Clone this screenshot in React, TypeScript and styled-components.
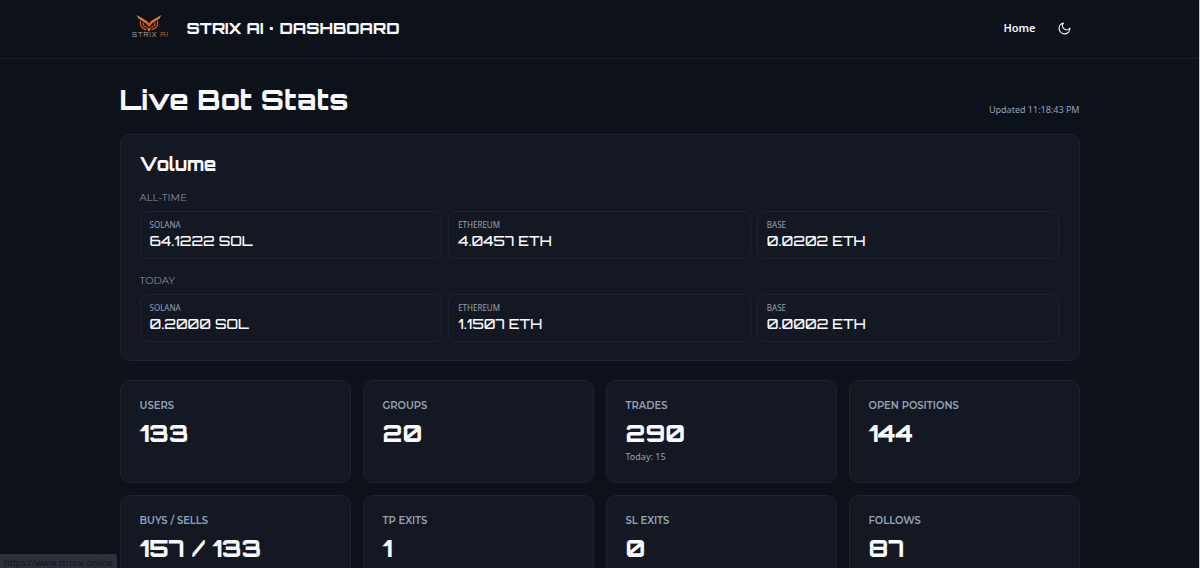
import React from "react";
import styled, { createGlobalStyle } from "styled-components";

const display = `"Orbitron", "DejaVu Sans", sans-serif`;
const label = `"Montserrat", "Inter", sans-serif`;
const body = `"Noto Sans", sans-serif`;

const GlobalStyle = createGlobalStyle`
  *, *::before, *::after { box-sizing: border-box; }
  html { scrollbar-width: none; background: #0d1119; }
  body { margin: 0; font-family: ${body}; color: #f8fafc; }
  h1, h2, h3, p, dl, dt, dd { margin: 0; }
`;

const Page = styled.div`
  height: 100vh;
  overflow: hidden;
  background: #0d1119;
  border-right: 1px solid #c9cbd0;
`;

const Header = styled.header`
  border-bottom: 1px solid #1b202d;
`;

const Container = styled.div`
  width: 100%;
  max-width: 960px;
  margin: 0 auto;
`;

const HeaderRow = styled(Container)`
  display: flex;
  align-items: center;
  justify-content: space-between;
  padding: 8px 5px 10px 8px;
`;

const Brand = styled.a`
  display: flex;
  align-items: center;
  gap: 16px;
  color: inherit;
  text-decoration: none;
`;

const BrandName = styled.span`
  font: 800 16px/40px ${display};
`;

const Nav = styled.nav`
  display: flex;
  align-items: center;
  gap: 19px;
`;

const NavLink = styled.a`
  color: #f8fafc;
  font: 600 11px/16px ${body};
  text-decoration: none;
`;

const ThemeButton = styled.button`
  display: grid;
  place-items: center;
  width: 20px;
  height: 20px;
  padding: 0;
  border: 0;
  background: none;
  color: #f8fafc;
`;

const Main = styled(Container).attrs({ as: "main" })`
  display: flex;
  flex-direction: column;
  padding: 21px 0;
`;

const TitleRow = styled.div`
  display: flex;
  align-items: flex-end;
  justify-content: space-between;
  margin-bottom: 14px;
`;

const Title = styled.h1`
  font: 800 28px/40px ${display};
`;

const Note = styled.p`
  color: #94a3b8;
  font: 400 9px/20px ${body};
`;

const Card = styled.section`
  background: #141822;
  border: 1px solid #1e2433;
  border-radius: 10px;
  padding: 18px 19px;
`;

const CardTitle = styled.h2`
  font: 800 18px/22px ${display};
`;

const Period = styled.div`
  padding-top: 17px;

  & + & {
    padding-top: 16px;
  }
`;

const PeriodName = styled.h3`
  color: #8492a6;
  font: 400 10px/12px ${label};
  margin-bottom: 7px;
`;

const Chains = styled.div`
  display: grid;
  grid-template-columns: repeat(3, 1fr);
  gap: 6px;
`;

const Chain = styled.dl`
  border: 1px solid #1e2433;
  border-radius: 8px;
  padding: 7px 9px;
`;

const ChainName = styled.dt`
  color: #94a3b8;
  font: 400 8px/12px ${body};
`;

const ChainValue = styled.dd`
  font: 500 14px/20px ${display};
`;

const Stats = styled.div`
  display: grid;
  grid-template-columns: repeat(4, 1fr);
  grid-auto-rows: 103px;
  gap: 12px;
  margin-top: 19px;
`;

const StatLabel = styled.h3`
  color: #94a3b8;
  font: 600 10px/14px ${label};
`;

const StatValue = styled.p`
  font: 800 24px/28px ${display};
  margin-top: 6px;
`;

const StatusBubble = styled.div`
  position: fixed;
  left: 0;
  bottom: 0;
  height: 14px;
  padding: 0 4px;
  background: #2b303b;
  border-radius: 0 3px 0 0;
  color: #10141c;
  font: 400 9px/17px ${body};
  overflow: hidden;
`;

const OwlLogo = () => (
  <svg width="43" height="40" viewBox="0 0 43 40" role="img" aria-label="Strix AI">
    <defs>
      <linearGradient id="owl" x1="0" y1="0" x2="0" y2="1">
        <stop offset="0" stopColor="#f08a2c" />
        <stop offset="1" stopColor="#d9541c" />
      </linearGradient>
    </defs>
    <g fill="url(#owl)">
      <path d="M8.500 7 L19 13 L21 15.500 L23 13 L33.500 7 L31.500 10.500 L24 15.500 L21 19 L18 15.500 L10.500 10.500 Z" />
      <path d="M19.300 19 L21 20.500 L22.700 19 L22.200 22 L21 24 L19.800 22 Z" />
    </g>
    <g fill="none" stroke="#c8581f" strokeWidth="1.300">
      <path d="M12.500 13 C11.500 17.500 14 21 18.500 21.500" />
      <path d="M29.500 13 C30.500 17.500 28 21 23.500 21.500" />
      <path d="M15 14.500 C14.700 17.500 16.500 19.200 18.800 18.700" />
      <path d="M27 14.500 C27.300 17.500 25.500 19.200 23.200 18.700" />
    </g>
    <text x="4" y="29" fontFamily="Orbitron, DejaVu Sans" fontWeight="500" fontSize="6" letterSpacing="1" fill="#858a94">
      STRIX <tspan fill="#b85420">AI</tspan>
    </text>
  </svg>
);

const MoonIcon = () => (
  <svg width="13" height="13" viewBox="0 0 24 24" fill="none" stroke="currentColor" strokeWidth="2.200" strokeLinecap="round" strokeLinejoin="round" aria-hidden="true">
    <path d="M10 2a7.500 7.500 0 0 0 12 9.500A10 10 0 1 1 10 2Z" />
  </svg>
);

const volumes = [
  { period: "ALL-TIME", values: [["SOLANA", "64.1222 SOL"], ["ETHEREUM", "4.0457 ETH"], ["BASE", "0.0202 ETH"]] },
  { period: "TODAY", values: [["SOLANA", "0.2000 SOL"], ["ETHEREUM", "1.1507 ETH"], ["BASE", "0.0002 ETH"]] },
];

const stats: { name: string; value: string; note?: string }[] = [
  { name: "USERS", value: "133" },
  { name: "GROUPS", value: "20" },
  { name: "TRADES", value: "290", note: "Today: 15" },
  { name: "OPEN POSITIONS", value: "144" },
  { name: "BUYS / SELLS", value: "157 / 133" },
  { name: "TP EXITS", value: "1" },
  { name: "SL EXITS", value: "0" },
  { name: "FOLLOWS", value: "87" },
];

export default function App() {
  return (
    <>
      <GlobalStyle />
      <Page>
        <Header>
          <HeaderRow>
            <Brand href="#">
              <OwlLogo />
              <BrandName>STRIX AI · DASHBOARD</BrandName>
            </Brand>
            <Nav>
              <NavLink href="#">Home</NavLink>
              <ThemeButton type="button" aria-label="Toggle theme">
                <MoonIcon />
              </ThemeButton>
            </Nav>
          </HeaderRow>
        </Header>
        <Main>
          <TitleRow>
            <Title>Live Bot Stats</Title>
            <Note>Updated 11:18:43 PM</Note>
          </TitleRow>
          <Card>
            <CardTitle>Volume</CardTitle>
            {volumes.map((v) => (
              <Period key={v.period}>
                <PeriodName>{v.period}</PeriodName>
                <Chains>
                  {v.values.map(([name, value]) => (
                    <Chain key={name}>
                      <ChainName>{name}</ChainName>
                      <ChainValue>{value}</ChainValue>
                    </Chain>
                  ))}
                </Chains>
              </Period>
            ))}
          </Card>
          <Stats>
            {stats.map((s) => (
              <Card key={s.name}>
                <StatLabel>{s.name}</StatLabel>
                <StatValue>{s.value}</StatValue>
                {s.note && <Note>{s.note}</Note>}
              </Card>
            ))}
          </Stats>
        </Main>
        <StatusBubble>https://www.strixai.online</StatusBubble>
      </Page>
    </>
  );
}
